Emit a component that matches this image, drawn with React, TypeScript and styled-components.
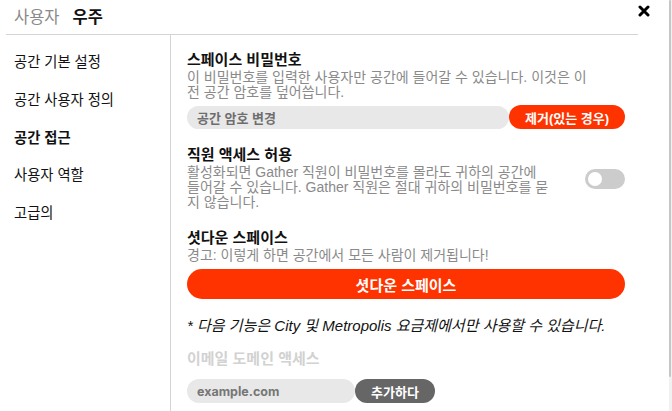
import React from "react";
import styled, { createGlobalStyle } from "styled-components";

const Global = createGlobalStyle`
  html, body { margin: 0; padding: 0; background: #fff; overflow: hidden; }
  body { font-family: "Liberation Sans", "Noto Sans CJK KR", sans-serif; color: #111; }
  * { box-sizing: border-box; }
`;

const Frame = styled.div`
  display: flex;
  height: 100vh;
  overflow: hidden;
  background: #fff;
`;

const Page = styled.div`
  position: relative;
  flex: 1;
  min-width: 0;
`;

const ScrollTrack = styled.div`
  width: 3px;
  flex-shrink: 0;
  background: #f1f1f1;
  display: flex;
  flex-direction: column;
`;

const ScrollThumb = styled.div`
  width: 2px;
  height: 377px;
  background: #c6c6c6;
  border-radius: 1px;
`;

const Header = styled.div`
  margin-left: 6px;
  width: 632px;
  height: 35px;
  border-bottom: 1px solid #d4d4d4;
  padding-left: 8px;
  display: flex;
  align-items: center;
  gap: 13px;
  font-size: 16.5px;
  line-height: 20px;
`;

const Crumb = styled.span<{ $strong?: boolean }>`
  color: ${(p) => (p.$strong ? "#111" : "#8a8a8a")};
  font-weight: ${(p) => (p.$strong ? 700 : 400)};
`;

const Close = styled.button`
  position: absolute;
  top: 5px;
  left: 638px;
  width: 12px;
  height: 12px;
  padding: 0;
  border: 0;
  background: none;
  display: flex;
`;

const Body = styled.div`
  display: flex;
  align-items: stretch;
`;

const Sidebar = styled.nav`
  margin-left: 6px;
  width: 165px;
  flex-shrink: 0;
  border-right: 1px solid #d4d4d4;
  padding-top: 8px;
  display: flex;
  flex-direction: column;
`;

const NavItem = styled.div<{ $active?: boolean }>`
  padding-left: 8px;
  height: 37.8px;
  line-height: 38px;
  font-size: 14.3px;
  color: #111;
  font-weight: ${(p) => (p.$active ? 700 : 400)};
  white-space: nowrap;
`;

const Content = styled.main`
  padding: 15px 0 46px 16px;
  width: 454px;
  display: flex;
  flex-direction: column;
`;

const Section = styled.section<{ $gap?: number }>`
  margin-top: ${(p) => p.$gap ?? 0}px;
  display: flex;
  flex-direction: column;
`;

const Title = styled.div<{ $muted?: boolean }>`
  font-size: 15px;
  line-height: 20px;
  font-weight: 700;
  color: ${(p) => (p.$muted ? "#d2d2d2" : "#111")};
  white-space: nowrap;
`;

const Desc = styled.div`
  font-size: 14px;
  line-height: 15px;
  color: #8a8a8a;
  white-space: nowrap;
`;

const Row = styled.div<{ $top?: number }>`
  margin-top: ${(p) => p.$top ?? 0}px;
  display: flex;
  align-items: center;
`;

const Field = styled.div<{ $width: number; $height: number }>`
  width: ${(p) => p.$width}px;
  height: ${(p) => p.$height}px;
  border-radius: ${(p) => p.$height / 2}px;
  background: #e8e8e8;
  padding-left: 10px;
  display: flex;
  align-items: center;
  font-size: 13px;
  font-weight: 700;
  color: #6e6e6e;
  white-space: nowrap;
`;

const FieldLatin = styled(Field)`
  font-family: Inter, "Liberation Sans", sans-serif;
  font-size: 12.5px;
  color: #767676;
`;

const Pill = styled.button<{ $bg: string; $width?: number; $height: number; $size?: number }>`
  width: ${(p) => (p.$width ? `${p.$width}px` : "100%")};
  height: ${(p) => p.$height}px;
  border-radius: ${(p) => p.$height / 2}px;
  border: 0;
  padding: 0;
  background: ${(p) => p.$bg};
  color: #fff;
  font-family: "Liberation Sans", "Noto Sans CJK KR", sans-serif;
  font-weight: 700;
  font-size: ${(p) => p.$size ?? 13}px;
  display: flex;
  align-items: center;
  justify-content: center;
  white-space: nowrap;
  flex-shrink: 0;
`;

const ToggleRow = styled.div`
  display: flex;
  align-items: center;
  justify-content: space-between;
  width: 438px;
`;

const Toggle = styled.div`
  width: 40px;
  height: 20px;
  border-radius: 10px;
  background: #cccccc;
  padding: 3px;
  display: flex;
  align-items: center;
  flex-shrink: 0;
  margin-top: 2px;
`;

const Knob = styled.div`
  width: 14px;
  height: 14px;
  border-radius: 50%;
  background: #fff;
`;

const Note = styled.div`
  font-size: 15px;
  line-height: 20px;
  font-style: italic;
  color: #111;
  white-space: nowrap;
`;

const RED = "#ff3300";

export default function App() {
  return (
    <>
      <Global />
      <Frame>
        <Page>
          <Header>
            <Crumb>사용자</Crumb>
            <Crumb $strong>우주</Crumb>
          </Header>
          <Close aria-label="닫기">
            <svg width="12" height="12" viewBox="0 0 12 12">
              <path d="M2 2 L10 10 M10 2 L2 10" stroke="#000" strokeWidth="3" strokeLinecap="round" />
            </svg>
          </Close>
          <Body>
            <Sidebar>
              <NavItem>공간 기본 설정</NavItem>
              <NavItem>공간 사용자 정의</NavItem>
              <NavItem $active>공간 접근</NavItem>
              <NavItem>사용자 역할</NavItem>
              <NavItem>고급의</NavItem>
            </Sidebar>
            <Content>
              <Section>
                <Title>스페이스 비밀번호</Title>
                <Desc>
                  이 비밀번호를 입력한 사용자만 공간에 들어갈 수 있습니다. 이것은 이
                  <br />전 공간 암호를 덮어씁니다.
                </Desc>
                <Row $top={5}>
                  <Field $width={322} $height={23}>공간 암호 변경</Field>
                  <Pill $bg={RED} $width={116} $height={24}>제거(있는 경우)</Pill>
                </Row>
              </Section>

              <Section $gap={16}>
                <ToggleRow>
                  <div>
                    <Title>직원 액세스 허용</Title>
                    <Desc>
                      활성화되면 Gather 직원이 비밀번호를 몰라도 귀하의 공간에
                      <br />들어갈 수 있습니다. Gather 직원은 절대 귀하의 비밀번호를 묻
                      <br />지 않습니다.
                    </Desc>
                  </div>
                  <Toggle>
                    <Knob />
                  </Toggle>
                </ToggleRow>
              </Section>

              <Section $gap={18}>
                <Title>셧다운 스페이스</Title>
                <Desc>경고: 이렇게 하면 공간에서 모든 사람이 제거됩니다!</Desc>
                <Row $top={6}>
                  <Pill $bg={RED} $width={438} $height={30} $size={15}>셧다운 스페이스</Pill>
                </Row>
              </Section>

              <Section $gap={17}>
                <Note>* 다음 기능은 City 및 Metropolis 요금제에서만 사용할 수 있습니다.</Note>
              </Section>

              <Section $gap={13}>
                <Title $muted>이메일 도메인 액세스</Title>
                <Row $top={10}>
                  <FieldLatin $width={168} $height={24}>example.com</FieldLatin>
                  <Pill $bg="#666666" $width={80} $height={24} $size={13}>추가하다</Pill>
                </Row>
              </Section>
            </Content>
          </Body>
        </Page>
        <ScrollTrack>
          <ScrollThumb />
        </ScrollTrack>
      </Frame>
    </>
  );
}
